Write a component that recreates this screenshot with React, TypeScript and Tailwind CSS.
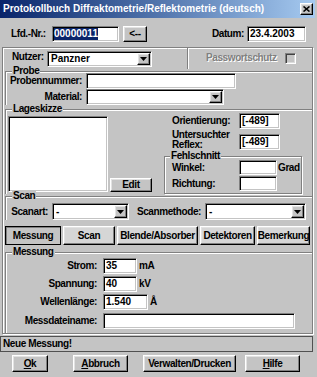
import type { ReactNode } from "react";

const raised =
  "border border-t-white border-l-white border-r-black border-b-black shadow-[inset_-1px_-1px_0_#808080,inset_1px_1px_0_#e2e2e2]";
const sunken =
  "bg-white border border-t-[#808080] border-l-[#808080] border-r-white border-b-white shadow-[inset_1px_1px_0_#000,inset_-1px_-1px_0_#c4c4c4]";

function Field({ className = "", children }: { className?: string; children?: ReactNode }) {
  return (
    <div className={`${sunken} ${className} shrink-0 flex items-center pl-[2px] tracking-normal`}>
      {children}
    </div>
  );
}

function Combo({ className = "", value }: { className?: string; value?: string }) {
  return (
    <div className={`${sunken} ${className} shrink-0 flex items-stretch p-[1px] tracking-normal`}>
      <span className="flex-1 pl-[2px] flex items-center">{value}</span>
      <span className={`${raised} bg-[#c4c4c4] w-[13px] flex items-center justify-center`}>
        <svg width="7" height="4" viewBox="0 0 7 4">
          <path d="M0 0h7L3.5 4z" fill="#000" />
        </svg>
      </span>
    </div>
  );
}

function Legend({ title, className = "" }: { title: string; className?: string }) {
  return (
    <div className={`-mt-[7px] -mb-[5px] w-fit bg-[#c4c4c4] px-[1px] h-[12px] leading-[12px] ${className}`}>
      {title}
    </div>
  );
}

function Group({ title, className = "", children }: { title: string; className?: string; children?: ReactNode }) {
  return (
    <div
      className={`border-t border-l border-t-[#808080] border-l-[#808080] shadow-[inset_1px_1px_0_#fff] ${className}`}
    >
      <Legend title={title} className="ml-[6px]" />
      {children}
    </div>
  );
}

function Btn({ className = "", children }: { className?: string; children?: ReactNode }) {
  return (
    <div className={`${raised} bg-[#c4c4c4] ${className} shrink-0 flex items-center justify-center`}>{children}</div>
  );
}

const tabs = [
  { label: "Messung", w: "w-[56px]" },
  { label: "Scan", w: "w-[52px]" },
  { label: "Blende/Absorber", w: "w-[81px]" },
  { label: "Detektoren", w: "w-[55px]" },
  { label: "Bemerkung", w: "w-[53px]" },
];

export default function App() {
  return (
    <div className="w-[317px] h-[377px] overflow-hidden bg-[#c4c4c4] text-[10px] font-bold leading-[12px] text-black tracking-[-0.4px] font-['Liberation_Sans',Arial,sans-serif] flex flex-col">
      {/* Title bar */}
      <div className="h-[18px] w-[315px] shrink-0 bg-linear-to-r from-[#0a246a] to-[#a6caf0] flex items-center pl-[3px] pr-[2px] text-white tracking-normal">
        <span>Protokollbuch Diffraktometrie/Reflektometrie (deutsch)</span>
        <div className={`${raised} bg-[#c4c4c4] ml-auto w-[13px] h-[12px] flex items-center justify-center`}>
          <svg width="7" height="6" viewBox="0 0 7 6">
            <path d="M0.5 0.5L6.5 5.5M6.5 0.5L0.5 5.5" stroke="#000" strokeWidth="1.6" />
          </svg>
        </div>
      </div>

      {/* Lfd.-Nr. / Datum */}
      <div className="flex items-center h-[16px] mt-[8px] shrink-0">
        <span className="ml-[11px] w-[38px] shrink-0">Lfd.-Nr.:</span>
        <Field className="ml-[3px] w-[67px] h-[16px] !pl-[1px]">
          <span className="bg-[#0a246a] text-white">00000011</span>
        </Field>
        <Btn className="ml-[4px] w-[24px] h-[16px]">&lt;--</Btn>
        <span className="w-[97px] shrink-0 text-right">Datum:</span>
        <Field className="ml-[3px] w-[59px] h-[16px]">23.4.2003</Field>
      </div>

      {/* Main panel */}
      <div className="mt-[5px] ml-[2px] w-[311px] h-[287px] shrink-0 border border-[#808080] shadow-[inset_1px_1px_0_#fff,1px_1px_0_#fff] flex flex-col">
        {/* Nutzer / Passwortschutz */}
        <div className="flex h-[23px] shrink-0">
          <div className="w-[184px] flex items-start pt-[3px]">
            <span className="ml-[9px] w-[35px] shrink-0">Nutzer:</span>
            <Combo className="w-[105px] h-[16px]" value="Panzner" />
          </div>
          <div className="w-[2px] h-[21px] border-l border-l-[#808080] border-r border-r-white" />
          <div className="flex items-start pt-[4px]">
            <span className="ml-[17px] text-[#808080] [text-shadow:1px_1px_0_#fff]">Passwortschutz</span>
            <div className="ml-[8px] mt-[1px] w-[11px] h-[11px] border border-t-[#808080] border-l-[#808080] border-r-white border-b-white shadow-[inset_1px_1px_0_#404040,inset_-1px_-1px_0_#dcdcdc]" />
          </div>
        </div>

        {/* Probe */}
        <Group title="Probe" className="ml-[2px]">
          <div className="flex items-center h-[16px] mt-[1px]">
            <span className="w-[76px] shrink-0 text-right">Probennummer:</span>
            <Field className="ml-[4px] w-[150px] h-[16px]">&nbsp;</Field>
          </div>
          <div className="flex items-center h-[16px]">
            <span className="w-[76px] shrink-0 text-right">Material:</span>
            <Combo className="ml-[4px] w-[138px] h-[16px]" />
          </div>
        </Group>

        {/* Lageskizze */}
        <Group title="Lageskizze" className="ml-[2px] mt-[4px]">
          <div className="flex items-start">
            <div className="flex items-end mt-[6px] ml-[2px]">
              <div className={`${sunken} w-[100px] h-[76px] shrink-0`} />
              <Btn className="ml-[2px] w-[42px] h-[14px]">Edit</Btn>
            </div>
            <div className="ml-[12px] w-[138px] flex flex-col">
              <div className="flex items-center mt-[3px] h-[16px]">
                <span className="ml-[8px] w-[67px] shrink-0">Orientierung:</span>
                <Field className="w-[41px] h-[16px]">[-489]</Field>
              </div>
              <div className="flex items-start mt-[1px]">
                <span className="ml-[8px] w-[67px] shrink-0 leading-[10px]">
                  Untersuchter
                  <br />
                  Reflex:
                </span>
                <Field className="mt-[4px] w-[41px] h-[16px]">[-489]</Field>
              </div>
              <div className="mt-[6px] border border-[#808080] shadow-[inset_1px_1px_0_#fff,1px_1px_0_#fff] pb-[2px]">
                <Legend title="Fehlschnitt" className="ml-[5px]" />
                <div className="flex items-center mt-[3px] h-[15px]">
                  <span className="ml-[7px] w-[67px] shrink-0">Winkel:</span>
                  <Field className="w-[38px] h-[15px]" />
                  <span className="ml-[1px]">Grad</span>
                </div>
                <div className="flex items-center mt-[1px] h-[15px]">
                  <span className="ml-[7px] w-[67px] shrink-0">Richtung:</span>
                  <Field className="w-[38px] h-[15px]" />
                </div>
              </div>
            </div>
          </div>
        </Group>

        {/* Scan */}
        <Group title="Scan" className="ml-[2px] mt-[2px]">
          <div className="flex items-center mt-[6px] h-[17px]">
            <span className="w-[42px] shrink-0 text-right">Scanart:</span>
            <Combo className="ml-[4px] w-[77px] h-[17px]" value="-" />
            <span className="w-[72px] shrink-0 text-right">Scanmethode:</span>
            <Combo className="ml-[4px] w-[101px] h-[17px]" value="-" />
          </div>
        </Group>

        {/* Tabs */}
        <div className="flex gap-[2px] ml-[2px] mt-[6px] h-[19px] shrink-0">
          {tabs.map((t, i) =>
            i === 0 ? (
              <div
                key={t.label}
                className={`${t.w} shrink-0 border border-black shadow-[inset_1px_1px_0_#808080] bg-[#c4c4c4] flex items-center justify-center`}
              >
                {t.label}
              </div>
            ) : (
              <div
                key={t.label}
                className={`${t.w} shrink-0 ${raised} bg-[#d6d6d6] flex items-center justify-center`}
              >
                {t.label}
              </div>
            )
          )}
        </div>

        {/* Messung */}
        <Group title="Messung" className="ml-[2px] mt-[7px] flex-1">
          <div className="flex items-center mt-[5px] h-[16px]">
            <span className="w-[91px] shrink-0 text-right">Strom:</span>
            <Field className="ml-[6px] w-[34px] h-[16px]">35</Field>
            <span className="ml-[2px]">mA</span>
          </div>
          <div className="flex items-center mt-[2px] h-[16px]">
            <span className="w-[91px] shrink-0 text-right">Spannung:</span>
            <Field className="ml-[6px] w-[34px] h-[16px]">40</Field>
            <span className="ml-[2px]">kV</span>
          </div>
          <div className="flex items-center mt-[2px] h-[16px]">
            <span className="w-[91px] shrink-0 text-right">Wellenlänge:</span>
            <Field className="ml-[6px] w-[45px] h-[16px]">1.540</Field>
            <span className="ml-[2px]">Å</span>
          </div>
          <div className="flex items-center mt-[3px] h-[16px]">
            <span className="w-[91px] shrink-0 text-right">Messdateiname:</span>
            <Field className="ml-[6px] w-[192px] h-[16px]" />
          </div>
        </Group>
      </div>

      {/* Status bar */}
      <div className="mt-[2px] w-[313px] h-[16px] shrink-0 border border-[#505050] flex items-center pl-[2px]">
        Neue Messung!
      </div>

      {/* Buttons */}
      <div className="flex mt-[3px] h-[17px] shrink-0">
        <Btn className="ml-[12px] w-[36px]">
          <span className="underline">O</span>k
        </Btn>
        <Btn className="ml-[25px] w-[55px]">
          <span className="underline">A</span>bbruch
        </Btn>
        <Btn className="ml-[15px] w-[93px]">Verwalten/Drucken</Btn>
        <Btn className="ml-[9px] w-[55px]">
          <span className="underline">H</span>ilfe
        </Btn>
      </div>
    </div>
  );
}
